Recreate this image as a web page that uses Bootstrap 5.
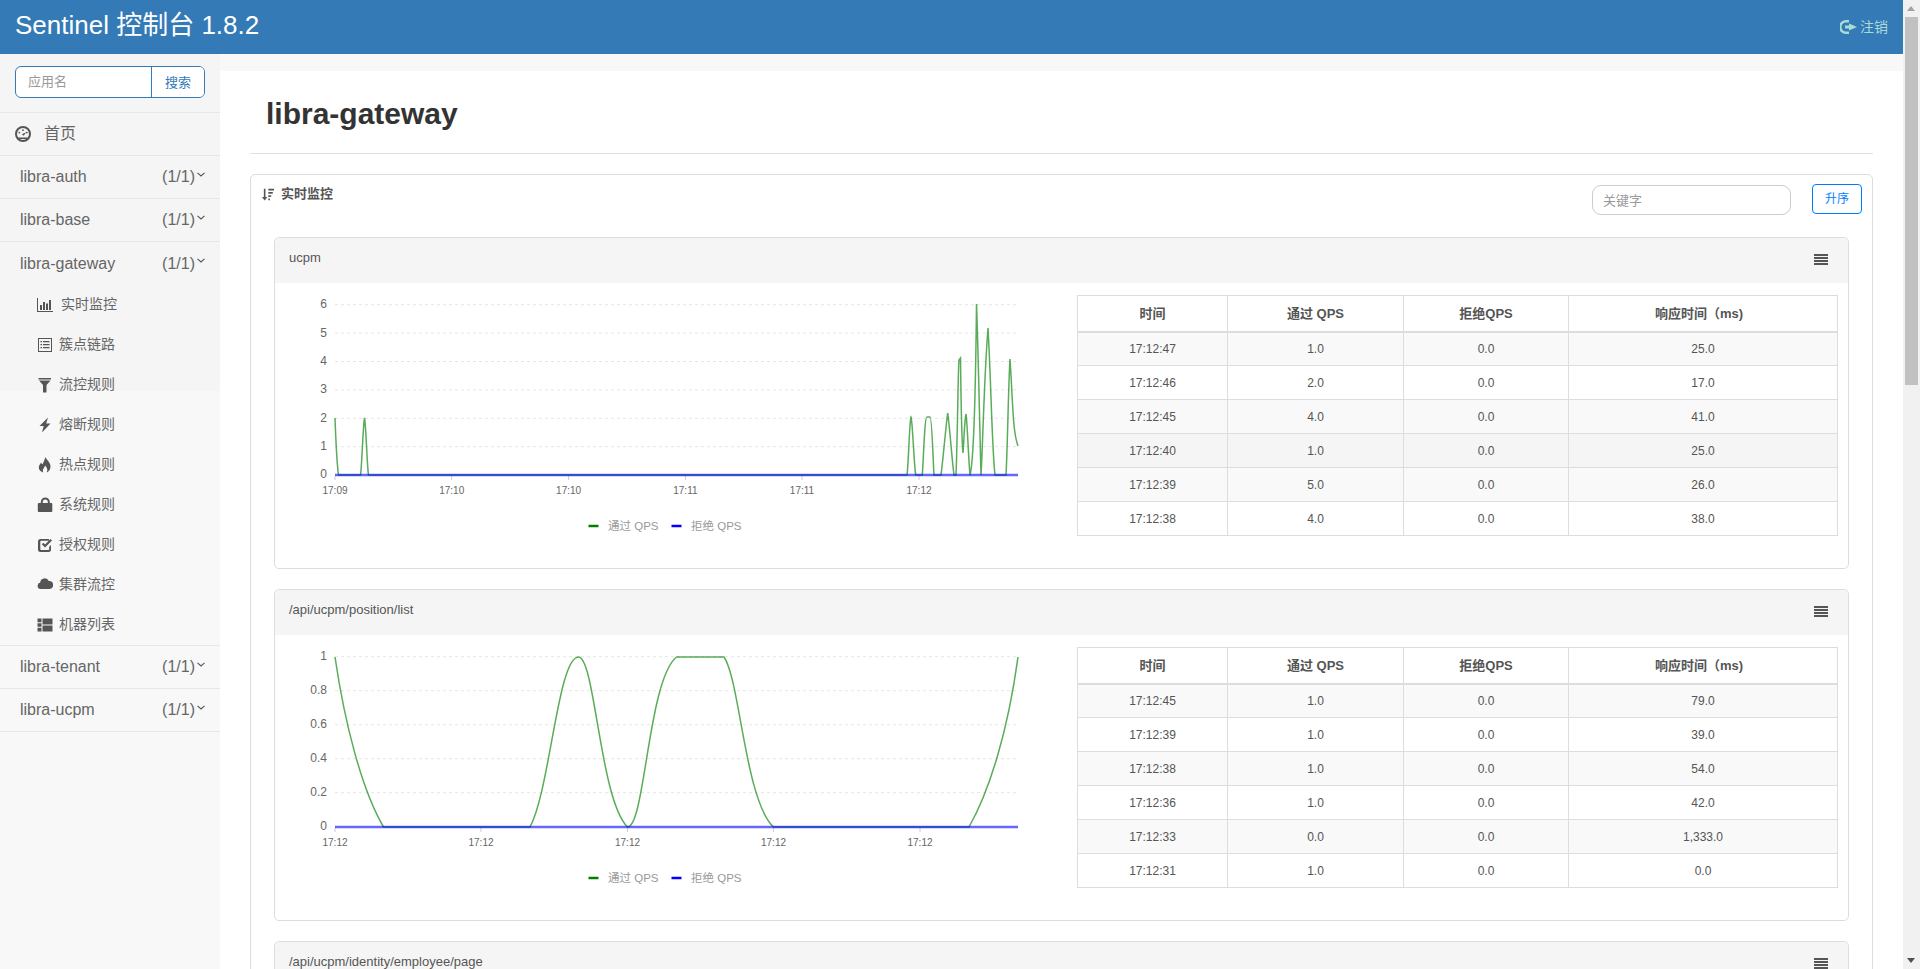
<!DOCTYPE html>
<html lang="zh-CN">
<head>
<meta charset="utf-8">
<title>Sentinel 控制台 1.8.2</title>
<link href="https://cdn.jsdelivr.net/npm/bootstrap@5.3.0/dist/css/bootstrap.min.css" rel="stylesheet">
<style>
html{scrollbar-width:none}
body{background:#f8f8f8;color:#555;font-family:"Liberation Sans","Noto Sans CJK SC",sans-serif;font-size:14px;min-height:2460px;padding-right:17px}
.fakescroll{position:fixed;top:0;right:0;bottom:0;width:17px;background:#f1f1f1;z-index:10}
.fakethumb{position:absolute;top:17px;left:2px;width:13px;height:368px;background:#c1c1c1}
.fakeup,.fakedown{position:absolute;left:4px;width:0;height:0;border-left:4.5px solid transparent;border-right:4.5px solid transparent}
.fakeup{top:6px;border-bottom:5px solid #a3a3a3}
.fakedown{bottom:6px;border-top:5px solid #505050}
.topbar{background:#337ab7;height:54px;padding:0 15px;color:#fff}
.brandname{font-size:26px;color:#fff;line-height:46px;margin:0 0 4px;font-weight:400}
.logout{color:#a9dcd6;font-size:14px;gap:3px}
.sidepane{width:220px;flex:none;background:linear-gradient(#f5f5f5 337px,#f8f8f8 337px)}
.searchbox{height:59px;padding:12px 15px 0;border-bottom:1px solid #e7e7e7}
.searchbox .input-group{height:32px;border:1px solid #337ab7;border-radius:6px;overflow:hidden;background:#fff;flex-wrap:nowrap}
.sideinput{flex:1 1 auto;min-width:0;border:0;padding:0 12px;font-size:13px;height:28px;background:transparent;outline:0}
.sideinput::placeholder{color:#999}
.sidebtn{width:53px;flex:none;border:0;border-left:1px solid #337ab7;background:#fff;color:#337ab7;font-size:13px;padding:2px 0 0}
.sideitem{height:43px;padding:0 15px 0 20px;font-size:16px;color:#666;border-bottom:1px solid #e7e7e7}
.sideitem.homeitem{padding-left:15px;gap:13px}
.sideitem.open{border-bottom:0}
.chev{margin:0 0 6px 2px}
.count{margin-left:auto}
.subnav{border-bottom:1px solid #e7e7e7}
.subitem{height:40px;padding-left:37px;padding-bottom:1px;font-size:14px;color:#666;gap:6px}
.subitem.firstsub{gap:8px}
.subitem svg{width:16px;height:16px;flex:none;fill:#555}
.mainpane{flex:1 1 auto;min-width:0;padding-top:17px}
.whitepane{background:#fff;padding:0 30px;min-height:2389px}
.pagetitle{height:83px;margin:0;border-bottom:1px solid #e1e1e1;padding:3px 0 0 16px;display:flex;align-items:center;font-size:30px;font-weight:700;color:#333;font-family:"Liberation Sans",sans-serif}
.outerbox{margin-top:20px;border:1px solid #ddd;border-radius:5px;padding:0 23px;background:#fff}
.outerhead{height:62px;margin:0 -13px}
.headlabel{font-size:13px;color:#555;font-weight:700;gap:7px;height:38px}
.kwinput{width:199px;height:30px;border:1px solid #ccc;border-radius:9px;padding:0 10px;font-size:13px;outline:0;margin-top:10px}
.kwinput::placeholder{color:#999}
.sortbtn{width:50px;height:30px;margin:9px 0 0 21px;padding:0;font-size:12px;border-color:#007bff;color:#007bff;border-radius:4px}
.metric{border:1px solid #ddd;border-radius:5px;margin-bottom:20px;height:332px;background:#fff}
.metric .card-header{height:45px;background:#f5f5f5;border:0;padding:0 20px 2px 14px;font-size:13px;color:#555;display:flex;align-items:center;justify-content:space-between}
.metric .card-header span{margin-bottom:4px}
.metric .card-body{padding:0;display:flex}
.plotsvg{width:802px;height:285px;flex:none;display:block}
.plotsvg text{font-family:"Liberation Sans","Noto Sans CJK SC",sans-serif}
.ty{font-size:12px;fill:#666;text-anchor:end}
.tx{font-size:10px;fill:#666;text-anchor:middle}
.lg{font-size:11.5px;fill:#999}
.grid{stroke:#e6e6e6;stroke-dasharray:3 3;fill:none}
.tick{stroke:#ccc}
.gline{fill:none;stroke:#008000;stroke-width:1.5;stroke-opacity:.65}
.bline{fill:none;stroke:#0000ff;stroke-width:2.500;stroke-opacity:.6}
.tablewrap{width:761px;flex:none;margin-top:12px}
.datatable{--bs-table-striped-bg:#f9f9f9;--bs-table-active-bg:#f5f5f5;--bs-table-color:#555;--bs-table-striped-color:#555;--bs-table-active-color:#555;--bs-table-border-color:#ddd;--bs-border-color:#ddd;border-color:#ddd;font-size:12px;table-layout:fixed;margin:0;text-align:center}
.datatable thead,.datatable tbody,.datatable tr,.datatable th,.datatable td{border-color:#ddd}
.datatable th{height:36px;padding:0;vertical-align:middle;font-size:13px;font-weight:700;color:#555;border-bottom:2px solid #ddd;border-top:1px solid #ddd}
.datatable th:last-child{padding-right:8px}
.datatable td{height:34px;padding:0;vertical-align:middle}
.datatable>:not(:first-child){border-top:0}
</style>
</head>
<body>
<svg width="0" height="0" class="d-none" aria-hidden="true"><defs>
<symbol id="i-gauge" viewBox="0 0 16 16"><circle cx="8" cy="8" r="7" fill="none" stroke="#555" stroke-width="2"/><circle cx="8" cy="4.200" r=".9"/><circle cx="4.300" cy="6.600" r=".9"/><circle cx="11.800" cy="6.600" r=".9"/><path d="M6.800 8.200 11 6.300 8.800 9.800ZM3 11.500h10L12 13H4Z"/></symbol>
<symbol id="i-stats" viewBox="0 0 16 16"><path d="M0 1h1v13h15v1H0zM3 8h2v5H3zM6 5h2v8H6zM9 6.500h2V13H9zM12 3h2v10h-2z"/></symbol>
<symbol id="i-list" viewBox="0 0 16 16"><path fill-rule="evenodd" d="M1 1h14v14H1Zm1 1v12h12V2Z"/><path d="M3.500 4h1.500v1.200H3.500zM6 4h6.500v1.200H6zM3.500 7h1.500v1.200H3.500zM6 7h6.500v1.200H6zM3.500 10h1.500v1.200H3.500zM6 10h6.500v1.200H6z"/></symbol>
<symbol id="i-filter" viewBox="0 0 16 16"><path d="M1.500 1h12.500v1.500H1.500zM2 3.500h11.500L9.500 8v7.500h-3.500V8Z"/></symbol>
<symbol id="i-flash" viewBox="0 0 16 16"><path d="M11 .5 2.500 9h4.200L5 15.500 13.500 6.500H9.200Z"/></symbol>
<symbol id="i-fire" viewBox="0 0 16 16"><path d="M8.500 0c.6 2.800 5 4.800 5 9.500 0 3.200-2 5.300-4 6 1.300-1.700 1.300-4-1.500-7-.4 2.200-2.200 3.200-2.200 5 0 .8.200 1.400.7 2C3.800 15 1.800 13 1.800 10.500c0-2.200 1.500-3.500 2.400-5 .3 1 .8 1.500 1.500 1.800C6.500 5 7.500 3 8.500 0Z"/></symbol>
<symbol id="i-lock" viewBox="0 0 16 16"><path fill-rule="evenodd" d="M3.500 6V5a4.500 4.500 0 0 1 9 0v1H14a1 1 0 0 1 1 1v7a1 1 0 0 1-1 1H1.500a1 1 0 0 1-1-1V7a1 1 0 0 1 1-1ZM5.500 6h5V5a2.500 2.500 0 0 0-5 0Z" transform="translate(.3 0)"/></symbol>
<symbol id="i-check" viewBox="0 0 16 16"><path d="M3.500 2H12v1.800H4a.7.7 0 0 0-.7.700v7.800c0 .4.300.7.700.7h7.500c.4 0 .7-.3.700-.7V9.800l1.800-1.800v4.500A2.500 2.500 0 0 1 11.500 15h-8A2.500 2.500 0 0 1 1 12.500v-8A2.500 2.500 0 0 1 3.500 2Z"/><path d="M4.800 7.300 6.300 5.800 8 7.500 13.500 2 15 3.500 8 10.500Z"/></symbol>
<symbol id="i-cloud" viewBox="0 0 16 16"><path d="M3.500 12a3.300 3.300 0 0 1-.3-6.500A4.500 4.500 0 0 1 11.800 4 4 4 0 0 1 12.500 12Z"/></symbol>
<symbol id="i-grid" viewBox="0 0 16 16"><path d="M.5 1.500h4v3.800h-4zM.5 6.300h4v3.500h-4zM.5 10.800h4v3.800h-4zM5.500 1.500h10v6h-10zM5.500 8.500h10v6h-10z"/></symbol>
<symbol id="i-sort" viewBox="0 0 16 16"><path d="M3.500 1h2v10h2.300L4.500 15.500 1.200 11h2.300zM9 1h7v2H9zM9 5h5.500v2H9zM9 9h3.500v2H9zM9 13h2v2H9z"/></symbol>
<symbol id="i-bars" viewBox="0 0 14 11"><path d="M0 0h14v2H0zM0 3h14v2H0zM0 6h14v2H0zM0 9h14v2H0z"/></symbol>
<symbol id="i-out" viewBox="0 0 17 14"><path d="M6 0h3v2.500H6A4.300 4.300 0 0 0 6 11.500h3V14H6A7 7 0 0 1 6 0Z"/><path d="M9 3.500 17 7l-8 3.500V8.500H5v-3h4Z"/></symbol>
<symbol id="i-chev" viewBox="0 0 8 5"><path d="M.5.800 4 4 7.500.800" fill="none" stroke="#555" stroke-width="1.100"/></symbol>
</defs></svg>

<div class="fakescroll" aria-hidden="true"><div class="fakeup"></div><div class="fakethumb"></div><div class="fakedown"></div></div>

<nav class="navbar topbar d-flex justify-content-between align-items-center flex-nowrap">
  <h1 class="brandname">Sentinel 控制台 1.8.2</h1>
  <a class="logout d-flex align-items-center text-decoration-none" href="#"><svg width="17" height="14" fill="#a9dcd6"><use href="#i-out"/></svg>注销</a>
</nav>

<div class="d-flex">
  <aside class="sidepane">
    <div class="searchbox">
      <div class="input-group">
        <input class="sideinput" placeholder="应用名">
        <button class="sidebtn" type="button">搜索</button>
      </div>
    </div>
    <div class="sideitem homeitem d-flex align-items-center"><svg width="16" height="16" fill="#555"><use href="#i-gauge"/></svg>首页</div>
    <div class="sideitem d-flex align-items-center">libra-auth<span class="count">(1/1)</span><svg class="chev" width="8" height="5"><use href="#i-chev"/></svg></div>
    <div class="sideitem d-flex align-items-center">libra-base<span class="count">(1/1)</span><svg class="chev" width="8" height="5"><use href="#i-chev"/></svg></div>
    <div class="sideitem open d-flex align-items-center">libra-gateway<span class="count">(1/1)</span><svg class="chev" width="8" height="5"><use href="#i-chev"/></svg></div>
    <div class="subnav">
      <div class="subitem firstsub d-flex align-items-center"><svg><use href="#i-stats"/></svg><span>实时监控</span></div>
      <div class="subitem d-flex align-items-center"><svg><use href="#i-list"/></svg><span>簇点链路</span></div>
      <div class="subitem d-flex align-items-center"><svg><use href="#i-filter"/></svg><span>流控规则</span></div>
      <div class="subitem d-flex align-items-center"><svg><use href="#i-flash"/></svg><span>熔断规则</span></div>
      <div class="subitem d-flex align-items-center"><svg><use href="#i-fire"/></svg><span>热点规则</span></div>
      <div class="subitem d-flex align-items-center"><svg><use href="#i-lock"/></svg><span>系统规则</span></div>
      <div class="subitem d-flex align-items-center"><svg><use href="#i-check"/></svg><span>授权规则</span></div>
      <div class="subitem d-flex align-items-center"><svg><use href="#i-cloud"/></svg><span>集群流控</span></div>
      <div class="subitem d-flex align-items-center"><svg><use href="#i-grid"/></svg><span>机器列表</span></div>
    </div>
    <div class="sideitem d-flex align-items-center">libra-tenant<span class="count">(1/1)</span><svg class="chev" width="8" height="5"><use href="#i-chev"/></svg></div>
    <div class="sideitem d-flex align-items-center">libra-ucpm<span class="count">(1/1)</span><svg class="chev" width="8" height="5"><use href="#i-chev"/></svg></div>
  </aside>

  <main class="mainpane">
    <div class="whitepane">
      <h2 class="pagetitle">libra-gateway</h2>
      <div class="outerbox">
        <div class="outerhead d-flex justify-content-between align-items-start">
          <div class="headlabel d-flex align-items-center"><svg width="13" height="13" fill="#555"><use href="#i-sort"/></svg>实时监控</div>
          <div class="d-flex">
            <input class="kwinput" placeholder="关键字">
            <button type="button" class="btn btn-outline-primary sortbtn">升序</button>
          </div>
        </div>

        <div class="card metric">
          <div class="card-header"><span>ucpm</span><svg width="14" height="11" fill="#555"><use href="#i-bars"/></svg></div>
          <div class="card-body">
            <svg class="plotsvg" viewBox="275 283 802 285">
              <path class="grid" d="M335 304.700H1018M335 333.100H1018M335 361.500H1018M335 389.900H1018M335 418.300H1018M335 446.600H1018"/>
              <path class="tick" d="M335 476v4M451.700 476v4M568.600 476v4M685.400 476v4M802 476v4M919 476v4"/>
              <text class="ty" x="327" y="308">6</text><text class="ty" x="327" y="337">5</text><text class="ty" x="327" y="365">4</text><text class="ty" x="327" y="393">3</text><text class="ty" x="327" y="422">2</text><text class="ty" x="327" y="450">1</text><text class="ty" x="327" y="478">0</text>
              <text class="tx" x="335" y="494">17:09</text><text class="tx" x="451.700" y="494">17:10</text><text class="tx" x="568.600" y="494">17:10</text><text class="tx" x="685.400" y="494">17:11</text><text class="tx" x="802" y="494">17:11</text><text class="tx" x="919" y="494">17:12</text>
              <path class="gline" d="M335 418C336 445 337 465 338.500 475L360.500 475C362 465 363 425 364.500 418C366 425 367 465 368.500 475L907 475C908.500 465 909.500 420 911 417C912.500 420 914 465 915.700 475L922.300 475C923.500 460 924.500 417 927 417L930 417C932 417 933 460 934 475L941 475C943 460 946 425 947.700 413C949.500 425 952 460 954 475L956 475C957.500 440 958 370 959 360L960.500 358C961 400 961.500 440 963 453C964 440 964.500 420 966 414C967.500 425 968.500 460 970 475C973 465 975.500 400 976.500 304C978 340 980 440 981 475C983 440 984 380 988 328C991 380 992 450 995 475L1006 475C1007.500 450 1008.500 380 1010 359C1011.500 380 1012.500 410 1014 425C1015 435 1016.500 442 1018 446"/>
              <path class="bline" d="M335 475H1018"/>
              <path stroke="#008000" stroke-width="2.500" d="M588.500 526h10"/><text class="lg" x="608" y="529.500">通过 QPS</text>
              <path stroke="#0000ff" stroke-width="2.500" d="M671.500 526h10"/><text class="lg" x="691" y="529.500">拒绝 QPS</text>
            </svg>
            <div class="tablewrap">
              <table class="table table-bordered table-striped datatable">
                <colgroup><col style="width:150px"><col style="width:176px"><col style="width:165px"><col></colgroup>
                <thead><tr><th>时间</th><th>通过 QPS</th><th>拒绝QPS</th><th>响应时间（ms)</th></tr></thead>
                <tbody>
                  <tr><td>17:12:47</td><td>1.0</td><td>0.0</td><td>25.0</td></tr>
                  <tr><td>17:12:46</td><td>2.0</td><td>0.0</td><td>17.0</td></tr>
                  <tr><td>17:12:45</td><td>4.0</td><td>0.0</td><td>41.0</td></tr>
                  <tr class="table-active"><td>17:12:40</td><td>1.0</td><td>0.0</td><td>25.0</td></tr>
                  <tr><td>17:12:39</td><td>5.0</td><td>0.0</td><td>26.0</td></tr>
                  <tr><td>17:12:38</td><td>4.0</td><td>0.0</td><td>38.0</td></tr>
                </tbody>
              </table>
            </div>
          </div>
        </div>

        <div class="card metric">
          <div class="card-header"><span>/api/ucpm/position/list</span><svg width="14" height="11" fill="#555"><use href="#i-bars"/></svg></div>
          <div class="card-body">
            <svg class="plotsvg" viewBox="275 635 802 285">
              <path class="grid" d="M335 656.700H1018M335 690.700H1018M335 724.700H1018M335 758.700H1018M335 792.700H1018"/>
              <path class="tick" d="M335 828v4M481 828v4M627.500 828v4M773.500 828v4M920 828v4"/>
              <text class="ty" x="327" y="660">1</text><text class="ty" x="327" y="694">0.8</text><text class="ty" x="327" y="728">0.6</text><text class="ty" x="327" y="762">0.4</text><text class="ty" x="327" y="796">0.2</text><text class="ty" x="327" y="830">0</text>
              <text class="tx" x="335" y="846">17:12</text><text class="tx" x="481" y="846">17:12</text><text class="tx" x="627.500" y="846">17:12</text><text class="tx" x="773.500" y="846">17:12</text><text class="tx" x="920" y="846">17:12</text>
              <path class="gline" d="M335 657C345 725 362 790 383.500 827L530 827C550 790 558 657 578.500 657C595 657 600 800 627.500 827C645 827 648 680 676.500 657L724 657C740 680 745 800 773.500 827L969 827C990 790 1008 730 1018 657"/>
              <path class="bline" d="M335 827H1018"/>
              <path stroke="#008000" stroke-width="2.500" d="M588.500 878h10"/><text class="lg" x="608" y="881.500">通过 QPS</text>
              <path stroke="#0000ff" stroke-width="2.500" d="M671.500 878h10"/><text class="lg" x="691" y="881.500">拒绝 QPS</text>
            </svg>
            <div class="tablewrap">
              <table class="table table-bordered table-striped datatable">
                <colgroup><col style="width:150px"><col style="width:176px"><col style="width:165px"><col></colgroup>
                <thead><tr><th>时间</th><th>通过 QPS</th><th>拒绝QPS</th><th>响应时间（ms)</th></tr></thead>
                <tbody>
                  <tr><td>17:12:45</td><td>1.0</td><td>0.0</td><td>79.0</td></tr>
                  <tr><td>17:12:39</td><td>1.0</td><td>0.0</td><td>39.0</td></tr>
                  <tr><td>17:12:38</td><td>1.0</td><td>0.0</td><td>54.0</td></tr>
                  <tr><td>17:12:36</td><td>1.0</td><td>0.0</td><td>42.0</td></tr>
                  <tr><td>17:12:33</td><td>0.0</td><td>0.0</td><td>1,333.0</td></tr>
                  <tr><td>17:12:31</td><td>1.0</td><td>0.0</td><td>0.0</td></tr>
                </tbody>
              </table>
            </div>
          </div>
        </div>

        <div class="card metric">
          <div class="card-header"><span>/api/ucpm/identity/employee/page</span><svg width="14" height="11" fill="#555"><use href="#i-bars"/></svg></div>
          <div class="card-body"></div>
        </div>
      </div>
    </div>
  </main>
</div>
<script src="https://cdn.jsdelivr.net/npm/bootstrap@5.3.0/dist/js/bootstrap.bundle.min.js"></script>
</body>
</html>
